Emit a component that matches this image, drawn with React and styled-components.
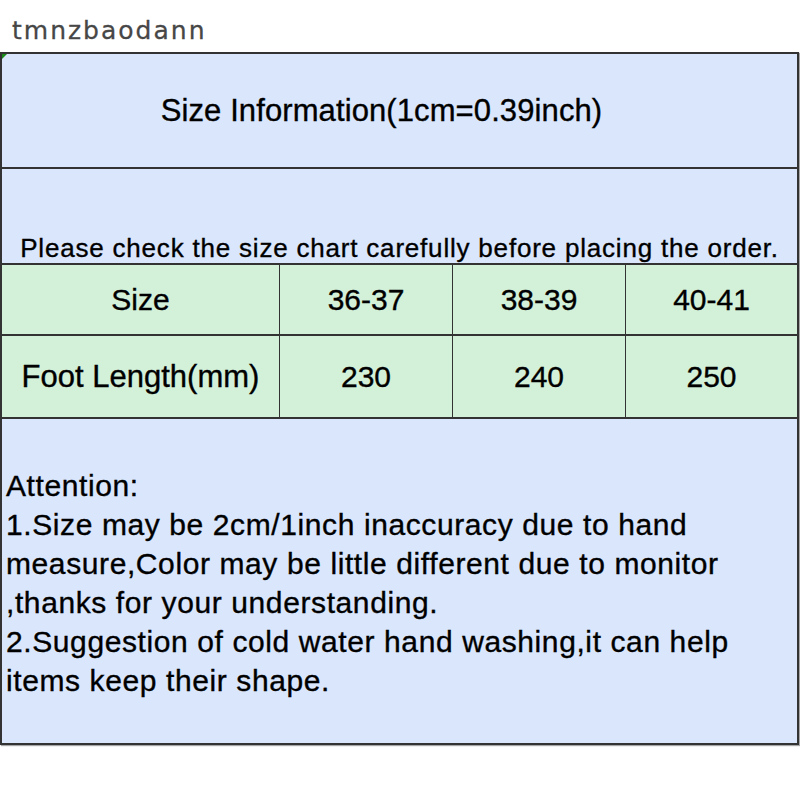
import React from "react";
import styled, { createGlobalStyle } from "styled-components";

const Global = createGlobalStyle`
  html, body { margin: 0; padding: 0; background: #ffffff; }
  body { font-family: "Liberation Sans", Arial, sans-serif; color: #000; }
`;

const Page = styled.div`
  width: 800px;
  height: 800px;
  background: #fff;
`;

const Brand = styled.div`
  height: 52px;
  box-sizing: border-box;
  padding: 16px 0 0 12px;
  font-family: "DejaVu Sans", Verdana, sans-serif;
  font-size: 25px;
  line-height: 30px;
  letter-spacing: 2px;
  color: #474747;
  -webkit-text-stroke: 0.3px #474747;
`;

const Table = styled.div`
  position: relative;
  width: 799px;
  box-sizing: border-box;
  border: 2px solid #333;
  background: #333;
  display: grid;
  grid-template-columns: 277px 172px 172px 171px;
  grid-template-rows: 113px 94px 69px 81px 324px;
  column-gap: 1px;
  row-gap: 2px;
  box-shadow: 1px 1px 1px rgba(0, 0, 0, 0.35);
  -webkit-text-stroke: 0.35px #000;
  &::before {
    content: "";
    position: absolute;
    left: 0;
    top: 0;
    border-top: 5px solid #1a8a1a;
    border-right: 5px solid transparent;
  }
`;

const Cell = styled.div`
  grid-column: ${(p) => (p.$span ? "1 / -1" : "auto")};
  background: ${(p) => (p.$green ? "#d3f0d9" : "#d9e6fb")};
  display: flex;
  justify-content: center;
  align-items: ${(p) => p.$align || "center"};
  box-sizing: border-box;
  padding-right: ${(p) => p.$shift || 0}px;
  font-size: ${(p) => p.$size || 30}px;
  letter-spacing: ${(p) => p.$ls || 0}px;
  white-space: nowrap;
`;

const Note = styled.span`
  line-height: 30px;
`;

const Attention = styled.div`
  grid-column: 1 / -1;
  background: #d9e6fb;
  box-sizing: border-box;
  padding: 47px 0 0 4px;
  font-size: 30px;
  line-height: 39px;
  letter-spacing: 0.6px;
`;

const Line = styled.div`
  white-space: nowrap;
`;

const sizes = ["36-37", "38-39", "40-41"];
const lengths = ["230", "240", "250"];

const attention = [
  "Attention:",
  "1.Size may be 2cm/1inch inaccuracy due to hand",
  "measure,Color may be little different due to monitor",
  ",thanks for your understanding.",
  "2.Suggestion of cold water hand washing,it can help",
  "items keep their shape.",
];

export default function App() {
  return (
    <Page>
      <Global />
      <Brand>tmnzbaodann</Brand>
      <Table>
        <Cell $span $size={31} $ls={0.1} $shift={36}>
          Size Information(1cm=0.39inch)
        </Cell>
        <Cell $span $size={26} $ls={0.8} $align="flex-end">
          <Note>Please check the size chart carefully before placing the order.</Note>
        </Cell>
        <Cell $green>Size</Cell>
        {sizes.map((s) => (
          <Cell $green key={s}>{s}</Cell>
        ))}
        <Cell $green $size={31}>Foot Length(mm)</Cell>
        {lengths.map((s) => (
          <Cell $green key={s}>{s}</Cell>
        ))}
        <Attention>
          {attention.map((l) => (
            <Line key={l}>{l}</Line>
          ))}
        </Attention>
      </Table>
    </Page>
  );
}
